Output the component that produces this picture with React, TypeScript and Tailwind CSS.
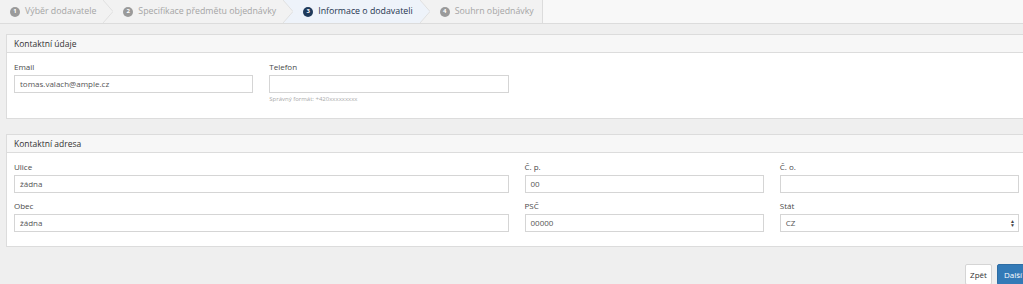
import React from 'react'

const steps = [
  { n: 1, label: 'Výběr dodavatele' },
  { n: 2, label: 'Specifikace předmětu objednávky' },
  { n: 3, label: 'Informace o dodavateli', active: true },
  { n: 4, label: 'Souhrn objednávky' },
]

function Chevron({ left, right }: { left: string; right: string }) {
  return (
    <svg width="10" height="23" viewBox="0 0 10 23" className="shrink-0 block">
      <rect x="0" y="0" width="10" height="23" fill={right} />
      <polygon points="0,0 10,11.5 0,23" fill={left} />
      <polyline points="0,0 10,11.5 0,23" fill="none" stroke="#e0e0e0" strokeWidth="1" />
    </svg>
  )
}

function Field({ label, value, className }: { label: string; value?: string; className?: string }) {
  return (
    <div className={className}>
      <div className="text-[8px] text-[#4a4a4a] h-[13px] leading-[13px] mb-[2px]">{label}</div>
      <div className="h-[18px] border border-[#d5d5d5] bg-white px-[5px] text-[8px] leading-[16px] text-[#555]">
        {value}
      </div>
    </div>
  )
}

function Panel({ title, children }: { title: string; children: React.ReactNode }) {
  return (
    <div className="border border-[#dcdcdc] bg-white">
      <div className="h-[18px] bg-[#f7f7f7] border-b border-[#dcdcdc] px-[7px] text-[8.5px] leading-[17px] text-[#333]">
        {title}
      </div>
      <div className="px-[7px] pt-[7px]">{children}</div>
    </div>
  )
}

export default function App() {
  return (
    <div className="w-[1023px] h-[284px] overflow-hidden bg-[#efefef]" style={{ fontFamily: '"Open Sans", sans-serif' }}>
      {/* wizard steps */}
      <div className="flex h-[24px] border-b border-[#dcdcdc] bg-[#f8f8f8]">
        {steps.map((s, i) => {
          const bg = s.active ? '#eef3fa' : '#f2f2f2'
          const next = steps[i + 1]
          const nextBg = next ? (next.active ? '#eef3fa' : '#f2f2f2') : '#f2f2f2'
          return (
            <React.Fragment key={s.n}>
              <div
                className={`flex items-center gap-[5px] h-[23px] text-[8.8px] pl-[10px] ${next ? 'pr-[7px]' : 'pr-[8px] border-r border-[#dcdcdc]'} ${s.active ? 'bg-[#eef3fa] text-[#1f3550]' : 'bg-[#f2f2f2] text-[#a5a5a5]'}`}
              >
                <span
                  className={`w-[10px] h-[10px] rounded-full flex items-center justify-center text-[6px] font-bold text-white ${s.active ? 'bg-[#1f3a5a]' : 'bg-[#9a9a9a]'}`}
                >
                  {s.n}
                </span>
                <span className="whitespace-nowrap">{s.label}</span>
              </div>
              {next && <Chevron left={bg} right={nextBg} />}
            </React.Fragment>
          )
        })}
      </div>

      <div className="w-[1027px] pl-[6px] pt-[10px]">
        <Panel title="Kontaktní údaje">
          <div className="grid grid-cols-4 gap-x-4 h-[58px]">
            <Field label="Email" value="tomas.valach@ample.cz" />
            <div>
              <Field label="Telefon" />
              <div className="text-[6px] text-[#aaa] mt-[2px]">Správný formát: +420xxxxxxxxx</div>
            </div>
          </div>
        </Panel>

        <div className="h-[15px]" />

        <Panel title="Kontaktní adresa">
          <div className="grid grid-cols-4 gap-x-4 gap-y-[6px] pb-[14px]">
            <Field label="Ulice" value="žádna" className="col-span-2" />
            <Field label="Č. p." value="00" />
            <Field label="Č. o." />
            <Field label="Obec" value="žádna" className="col-span-2" />
            <Field label="PSČ" value="00000" />
            <div>
              <div className="text-[8px] text-[#4a4a4a] h-[13px] leading-[13px] mb-[2px]">Stát</div>
              <div className="h-[18px] border border-[#d5d5d5] bg-white pl-[5px] pr-[3px] text-[8px] leading-[16px] text-[#555] flex justify-between">
                <span>CZ</span>
                <span className="flex flex-col justify-center text-[#444] text-[5px] leading-[4px]">
                  <span>▲</span>
                  <span>▼</span>
                </span>
              </div>
            </div>
          </div>
        </Panel>

        <div className="flex justify-end gap-[5px] pt-[17px] -mr-[5px]">
          <div className="h-[21px] w-[27px] bg-white border border-[#d5d5d5] rounded-[2px] text-[8px] leading-[19px] text-[#333] text-center">
            Zpět
          </div>
          <div className="h-[21px] w-[35px] pl-[6px] bg-[#337ab7] border border-[#2e6da4] rounded-[2px] text-[8px] leading-[19px] text-white">
            Další
          </div>
        </div>
      </div>
    </div>
  )
}
